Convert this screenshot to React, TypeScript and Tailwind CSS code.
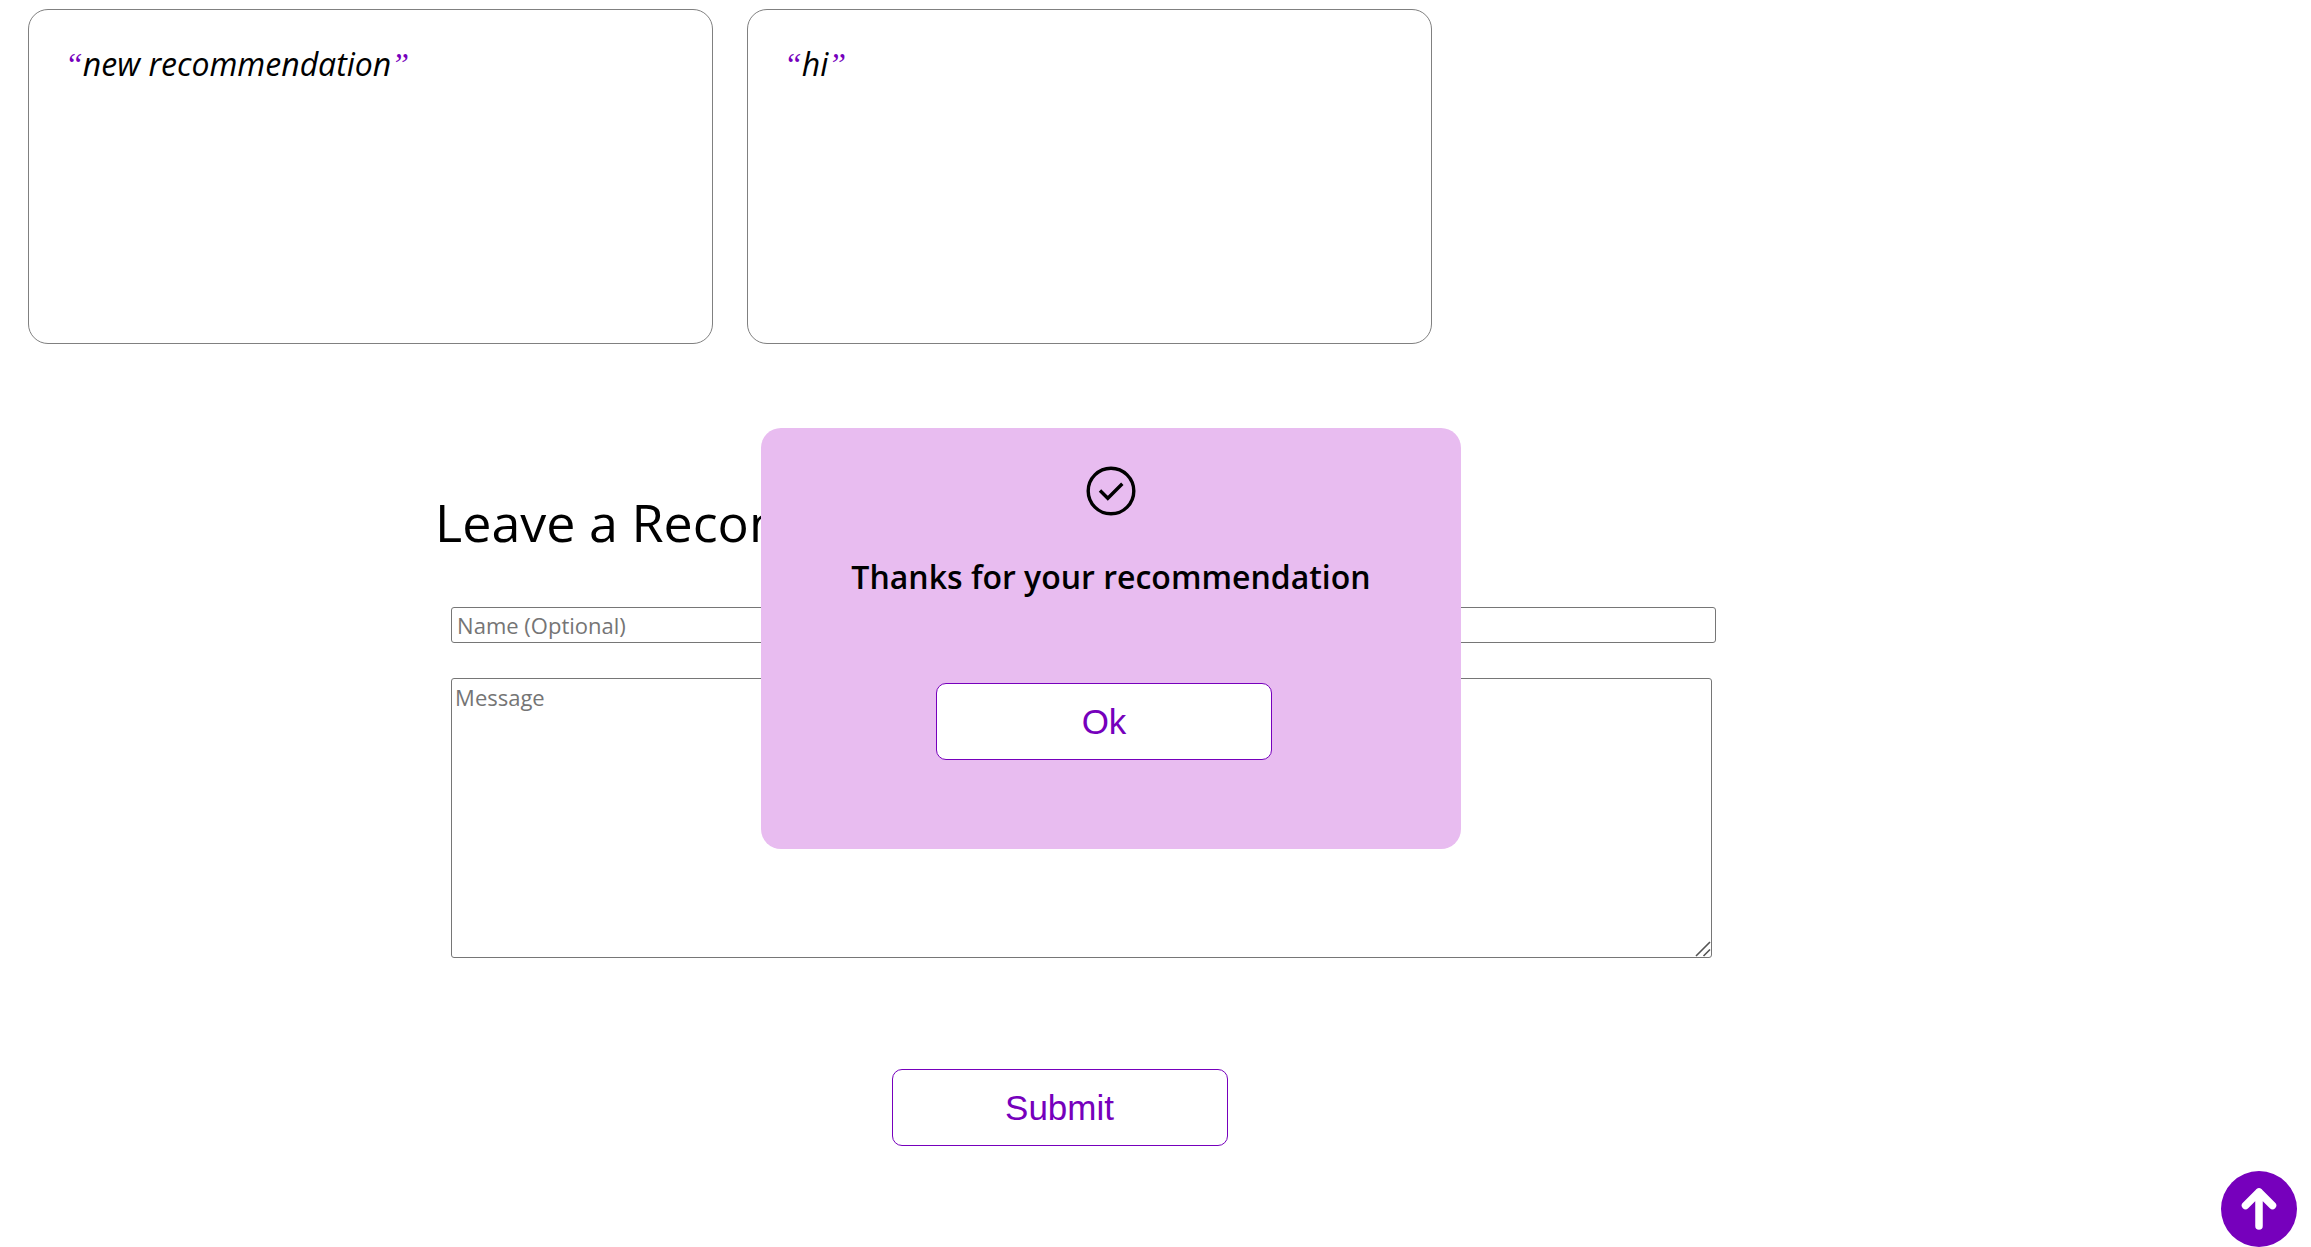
import { useState } from "react";

const recommendations = ["new recommendation", "hi"];

const actionButton =
  "h-[77px] w-[336px] rounded-[10px] border border-[#7600bc] bg-white font-['Liberation_Sans',Arial,sans-serif] text-[35px] leading-none text-[#7600bc]";

function RecommendationCard({ text }: { text: string }) {
  return (
    <article className="h-[335px] w-[30%] rounded-[20px] border border-[#808080] px-9 pt-8">
      <p className="flex text-[32px] leading-[44px] italic">
        <span className="font-['Liberation_Serif',serif] text-[#7600bc]">“</span>
        {text}
        <span className="font-['Liberation_Serif',serif] text-[#7600bc]">”</span>
      </p>
    </article>
  );
}

function CheckIcon() {
  return (
    <svg viewBox="0 0 50 50" className="size-[50px]" fill="none" stroke="currentColor" aria-hidden="true">
      <circle cx="25" cy="25" r="22.8" strokeWidth="3.4" />
      <path d="M14 24.5 L21.8 32.3 L36.3 17.8" strokeWidth="3.4" />
    </svg>
  );
}

function ArrowUpIcon() {
  return (
    <svg viewBox="0 0 76 76" className="size-full" fill="none" aria-hidden="true">
      <path
        d="M38 55 V21 M24.5 34.5 L38 21 L51.5 34.5"
        stroke="white"
        strokeWidth="7.5"
        strokeLinecap="round"
        strokeLinejoin="round"
      />
    </svg>
  );
}

function ResizeGrip() {
  return (
    <svg
      viewBox="0 0 16 16"
      className="pointer-events-none absolute right-[5px] bottom-px size-4"
      fill="none"
      stroke="#555555"
      strokeWidth="1.6"
      aria-hidden="true"
    >
      <path d="M1 15 L15 1 M8.5 15 L15 8.5" />
    </svg>
  );
}

export default function App() {
  const [open, setOpen] = useState(true);

  return (
    <main className="min-h-screen bg-white font-['Open_Sans',sans-serif] text-black">
      <section className="flex gap-[34px] pt-[9px] pl-7">
        {recommendations.map((text) => (
          <RecommendationCard key={text} text={text} />
        ))}
      </section>

      <section className="mx-auto mt-[143px] w-[62%]">
        <h2 className="-ml-1 text-[52px] leading-[70px]">Leave a Recommendation</h2>
        <form className="mr-[156px] ml-3 pt-[50px]" onSubmit={(e) => e.preventDefault()}>
          <input
            type="text"
            aria-label="Name (Optional)"
            placeholder="Name (Optional)"
            className="block h-9 w-full rounded-[3px] border border-[#767676] px-[5px] text-[22px] placeholder:text-[#757575]"
          />
          <div className="relative mt-[35px] pr-1">
            <textarea
              aria-label="Message"
              placeholder="Message"
              className="block h-[280px] w-full resize-y rounded-[3px] border border-[#767676] px-[3px] py-[3px] text-[22px] leading-[30px] placeholder:text-[#757575] [&::-webkit-resizer]:bg-transparent"
            />
            <ResizeGrip />
          </div>
          <div className="mt-[111px] flex justify-center pr-12">
            <button type="submit" className={actionButton}>
              Submit
            </button>
          </div>
        </form>
      </section>

      {open && (
        <div className="pointer-events-none fixed inset-0 flex items-center justify-center pt-[30px] pr-[89px]">
          <div
            role="dialog"
            aria-labelledby="thanks-title"
            className="pointer-events-auto flex h-[421px] w-[700px] flex-col items-center rounded-[20px] bg-[#e8bcf0] pt-[38px]"
          >
            <CheckIcon />
            <h3 id="thanks-title" className="mt-[39px] text-[32px] leading-[44px] font-semibold">
              Thanks for your recommendation
            </h3>
            <div className="mt-[84px] pr-[14px]">
              <button type="button" className={actionButton} onClick={() => setOpen(false)}>
                Ok
              </button>
            </div>
          </div>
        </div>
      )}

      <a
        href="#root"
        aria-label="Back to top"
        className="fixed right-[14px] bottom-0 size-[76px] rounded-full bg-[#7600bc]"
      >
        <ArrowUpIcon />
      </a>
    </main>
  );
}
